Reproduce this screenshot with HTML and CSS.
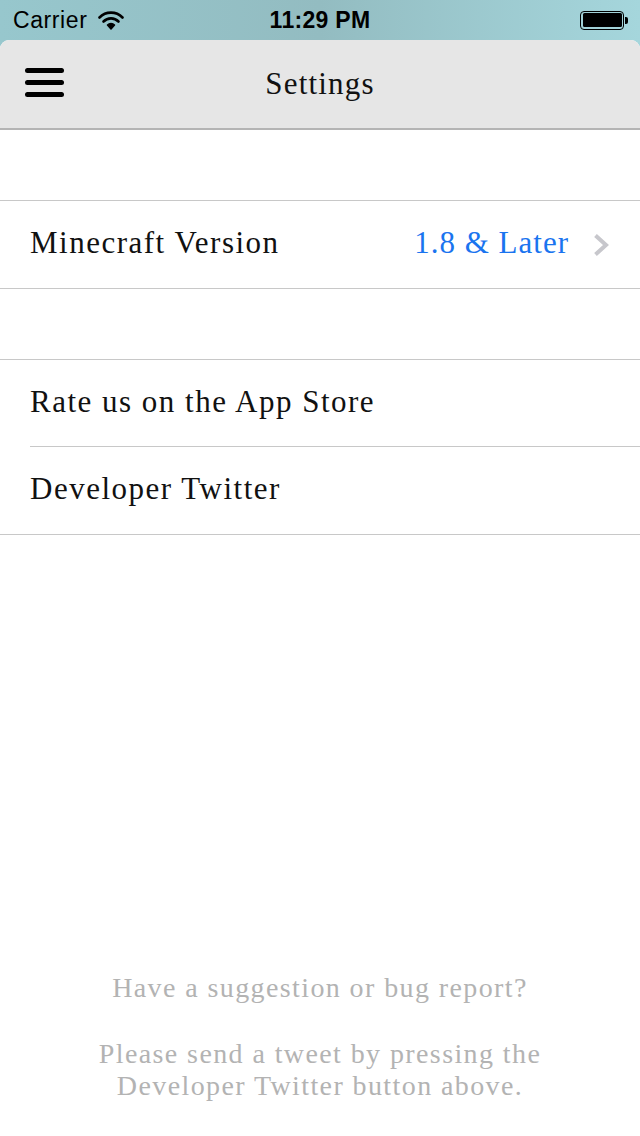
FILE: index.html
```html
<!DOCTYPE html>
<html>
<head>
<meta charset="utf-8">
<link rel="stylesheet" href="styles.css">
</head>
<body>
<div class="screen">
  <div class="status">
    <div class="st-left">
      <span class="carrier">Carrier</span>
      <svg class="wifi" width="26" height="20" viewBox="0 0 26 20">
        <path d="M1.5 7.5 A16 16 0 0 1 24.5 7.5" fill="none" stroke="#000" stroke-width="2.6" stroke-linecap="round"/>
        <path d="M5.5 11.5 A10.5 10.5 0 0 1 20.5 11.5" fill="none" stroke="#000" stroke-width="2.6" stroke-linecap="round"/>
        <path d="M9.5 15 A5 5 0 0 1 16.5 15 L13 19 Z" fill="#000" stroke="#000" stroke-width="1.5" stroke-linejoin="round"/>
      </svg>
    </div>
    <div class="st-time">11:29 PM</div>
    <div class="st-right">
      <div class="battery"><div class="battery-fill"></div></div>
      <div class="battery-knob"></div>
    </div>
  </div>
  <div class="app">
    <div class="navbar">
      <div class="menu">
        <span></span><span></span><span></span>
      </div>
      <div class="title">Settings</div>
    </div>
    <div class="content">
      <div class="spacer"></div>
      <div class="group">
        <div class="row">
          <span class="label">Minecraft Version</span>
          <span class="value">1.8 &amp; Later</span>
          <svg class="chev" width="18" height="24" viewBox="0 0 18 24"><path d="M3.5 2.5 L14 12 L3.5 21.5" fill="none" stroke="#c7c7cc" stroke-width="4"/></svg>
        </div>
      </div>
      <div class="spacer"></div>
      <div class="group">
        <div class="row inset"><span class="label">Rate us on the App Store</span></div>
        <div class="row"><span class="label">Developer Twitter</span></div>
      </div>
      <div class="fill"></div>
      <div class="footer">
        <p class="q">Have a suggestion or bug report?</p>
        <p class="msg">Please send a tweet by pressing the<br>Developer Twitter button above.</p>
      </div>
    </div>
  </div>
</div>
</body>
</html>
```
FILE: styles.css
```css
* { box-sizing: border-box; }
html, body { margin: 0; padding: 0; }
body { width: 640px; height: 1136px; overflow: hidden; background: #95c2c8; }
.screen { width: 640px; height: 1136px; display: flex; flex-direction: column; background: linear-gradient(90deg, #97c7cd 0%, #93bcc1 50%, #a5d6dc 100%); }
.status { height: 40px; display: flex; align-items: center; position: relative; font-family: "Liberation Sans", Arial, sans-serif; font-size: 23px; color: #000; padding: 0 12px 0 13px; }
.st-left { display: flex; align-items: center; gap: 11px; }
.carrier { letter-spacing: 0.6px; }
.wifi { margin-top: -1px; }
.st-time { position: absolute; left: 0; right: 0; text-align: center; font-weight: bold; pointer-events: none; letter-spacing: 0.3px; }
.st-right { margin-left: auto; display: flex; align-items: center; margin-right: 0; }
.battery { width: 44px; height: 19px; border: 1.5px solid #000; border-radius: 4px; padding: 1.5px; }
.battery-fill { width: 100%; height: 100%; background: #000; border-radius: 1.5px; }
.battery-knob { width: 3px; height: 7px; background: #000; border-radius: 0 2px 2px 0; margin-left: 1px; }
.app { flex: 1; display: flex; flex-direction: column; background: #fff; border-radius: 9px 9px 0 0; overflow: hidden; }
.navbar { height: 90px; background: #e6e6e6; border-bottom: 2px solid #b4b4b4; display: flex; align-items: center; position: relative; padding-left: 25px; }
.menu { display: flex; flex-direction: column; gap: 6.5px; margin-top: -3px; }
.menu span { display: block; width: 39px; height: 5.5px; background: #000; border-radius: 3px; }
.title { position: absolute; left: 0; right: 0; top: 26px; text-align: center; font-family: "Liberation Serif", "Times New Roman", serif; font-size: 31px; letter-spacing: 1.2px; color: #111; }
.content { flex: 1; display: flex; flex-direction: column; }
.spacer { height: 70px; }
.group { border-top: 1px solid #c8c8c8; border-bottom: 1px solid #c8c8c8; }
.row { height: 87px; display: flex; align-items: center; padding: 0 30px; font-family: "Liberation Serif", "Times New Roman", serif; font-size: 31px; letter-spacing: 1.5px; color: #111; }
.row.inset { position: relative; }
.row.inset::after { content: ""; position: absolute; left: 30px; right: 0; bottom: 0; height: 1px; background: #c8c8c8; }
.label { margin-top: -3px; }
.value { margin-left: auto; color: #1a74ef; margin-top: -3px; letter-spacing: 1px; margin-right: -1px; }
.chev { margin-left: 24px; margin-right: 0; }
.fill { flex: 1; }
.footer { text-align: center; font-family: "Liberation Serif", "Times New Roman", serif; color: #b3b3b3; font-size: 28px; letter-spacing: 1.4px; padding-bottom: 34px; }
.footer p { margin: 0; }
.q { line-height: 32px; margin-bottom: 34px !important; }
.msg { line-height: 32px; }
```
